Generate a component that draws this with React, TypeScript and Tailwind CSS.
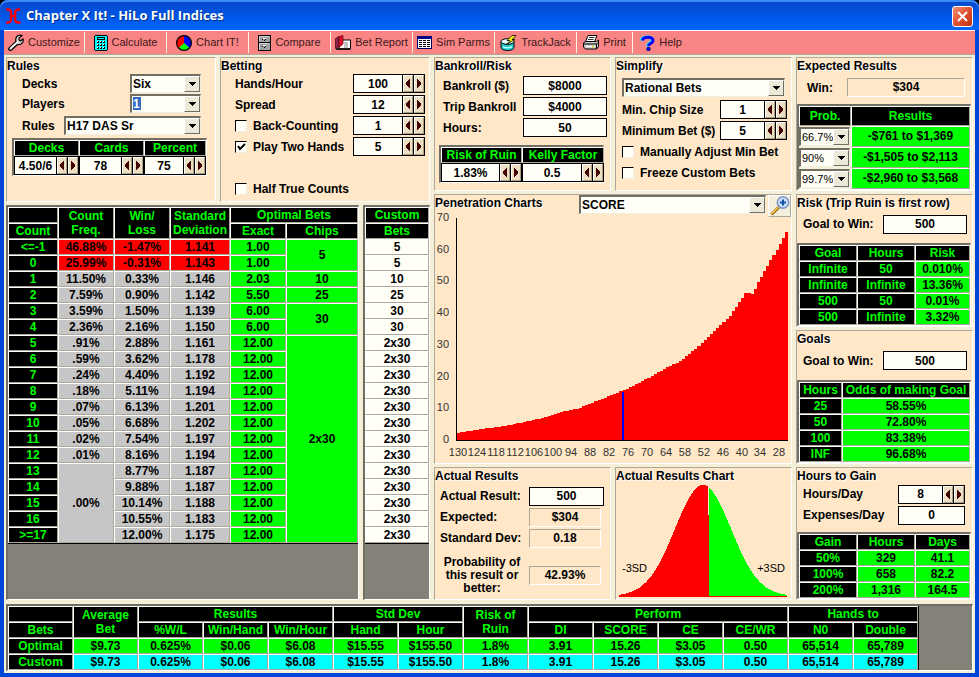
import { useId, useState } from "react"
import type { ReactNode } from "react"
import clsx from "clsx"

// ── Data ──────────────────────────────────────────────────────────────────────

// count, frequency, win/loss, standard deviation, exact bet, custom bet
const COUNT_ROWS = [
  ["<=-1", "46.88%", "-1.47%", "1.141", "1.00", "5"],
  ["0", "25.99%", "-0.31%", "1.143", "1.00", "5"],
  ["1", "11.50%", "0.33%", "1.146", "2.03", "10"],
  ["2", "7.59%", "0.90%", "1.142", "5.50", "25"],
  ["3", "3.59%", "1.50%", "1.139", "6.00", "30"],
  ["4", "2.36%", "2.16%", "1.150", "6.00", "30"],
  ["5", ".91%", "2.88%", "1.161", "12.00", "2x30"],
  ["6", ".59%", "3.62%", "1.178", "12.00", "2x30"],
  ["7", ".24%", "4.40%", "1.192", "12.00", "2x30"],
  ["8", ".18%", "5.11%", "1.194", "12.00", "2x30"],
  ["9", ".07%", "6.13%", "1.201", "12.00", "2x30"],
  ["10", ".05%", "6.68%", "1.202", "12.00", "2x30"],
  ["11", ".02%", "7.54%", "1.197", "12.00", "2x30"],
  ["12", ".01%", "8.16%", "1.194", "12.00", "2x30"],
  ["13", ".00%", "8.77%", "1.187", "12.00", "2x30"],
  ["14", "", "9.88%", "1.187", "12.00", "2x30"],
  ["15", "", "10.14%", "1.188", "12.00", "2x30"],
  ["16", "", "10.55%", "1.183", "12.00", "2x30"],
  [">=17", "", "12.00%", "1.175", "12.00", "2x30"],
]

// first row index -> merged chips cell
const CHIPS: Record<number, { text: string; span: number }> = {
  0: { text: "5", span: 2 },
  2: { text: "10", span: 1 },
  3: { text: "25", span: 1 },
  4: { text: "30", span: 2 },
  6: { text: "2x30", span: 13 },
}

const SUMMARY = [
  "$9.73", "0.625%", "$0.06", "$6.08", "$15.55", "$155.50", "1.8%",
  "3.91", "15.26", "$3.05", "0.50", "65,514", "65,789",
]

const SUMMARY_HEADS = [
  "%W/L", "Win/Hand", "Win/Hour", "Hand", "Hour", "DI", "SCORE", "CE", "CE/WR", "N0", "Double",
]

// outline of the SCORE curve in plot units
const SCORE_CURVE = [
  [22, 216], [48, 212], [75, 208], [112, 200], [130, 194], [142, 192], [162, 184],
  [187, 174], [208, 164], [235, 149], [243, 146], [262, 131], [278, 116], [295, 99],
  [311, 76], [318, 77], [323, 66], [332, 50], [342, 33], [352, 14],
]

// ── Tables ────────────────────────────────────────────────────────────────────

const TONES = {
  head: "bg-black text-[#00ff00]",
  green: "bg-[#00ff00]",
  red: "bg-[#ff0000]",
  gray: "bg-[#c6c6c6]",
  white: "bg-[#fffff8]",
  cyan: "bg-[#00ffff]",
}

interface CellProps {
  tone: keyof typeof TONES
  children?: ReactNode
  rowSpan?: number
  colSpan?: number
  wrap?: boolean
  height?: string
}

function Cell({ tone, children, rowSpan, colSpan, wrap, height = "h-4" }: CellProps) {
  const Tag = tone === "head" ? "th" : "td"
  return (
    <Tag
      rowSpan={rowSpan}
      colSpan={colSpan}
      className={clsx(
        "border-t border-r border-b border-l border-t-white border-l-white border-r-[#aca899] border-b-[#aca899] p-0 text-center leading-[14px] font-bold",
        !wrap && "whitespace-nowrap",
        TONES[tone],
        height,
      )}
    >
      {children}
    </Tag>
  )
}

function Grid({ cols, className, children }: { cols: string[]; className?: string; children: ReactNode }) {
  return (
    <table className={clsx("table-fixed border-separate border-spacing-0", className)}>
      <colgroup>
        {cols.map((c, i) => (
          <col key={i} className={c} />
        ))}
      </colgroup>
      <tbody>{children}</tbody>
    </table>
  )
}

const SUNKEN = "border-t-2 border-r border-b border-l-2 border-t-[#716f64] border-l-[#716f64] border-r-white border-b-white"

// ── Controls ──────────────────────────────────────────────────────────────────

function Panel({ title, className, children }: { title: string; className?: string; children: ReactNode }) {
  return (
    <section
      className={clsx(
        "flex min-w-0 flex-col border border-t-[#aca899] border-r-white border-b-white border-l-[#aca899] bg-[#ffe7c8]",
        className,
      )}
    >
      <h2 className="h-4 leading-4 whitespace-nowrap [text-shadow:1px_1px_0_#fff]">{title}</h2>
      {children}
    </section>
  )
}

function SpinArrow({ dir }: { dir: "left" | "right" }) {
  return (
    <button
      type="button"
      aria-label={dir === "left" ? "Decrease" : "Increase"}
      className="ml-px flex w-2.5 shrink-0 items-center justify-center self-stretch border border-t-white border-r-[#aca080] border-b-[#aca080] border-l-white bg-[#ecdfc4]"
    >
      <svg width="4" height="9" viewBox="0 0 4 9" fill="#400000" shapeRendering="crispEdges">
        {dir === "left" ? (
          <path d="M3 0h1v9H3V8H2V7H1V6H0V3h1V2h1V1h1z" />
        ) : (
          <path d="M0 0h1v1h1v1h1v1h1v3H3v1H2v1H1v1H0z" />
        )}
      </svg>
    </button>
  )
}

interface SpinProps {
  id?: string
  label?: string
  value: string
  className?: string
}

function Spin({ id, label, value, className }: SpinProps) {
  const [text, setText] = useState(value)
  return (
    <div className={clsx("flex h-[19px] items-stretch border border-black bg-black", className)}>
      <input
        id={id}
        aria-label={label}
        value={text}
        onChange={(e) => setText(e.target.value)}
        className="w-0 flex-1 bg-[#fffff8] text-center font-bold outline-none"
      />
      <SpinArrow dir="left" />
      <SpinArrow dir="right" />
    </div>
  )
}

function TextBox({ id, value, className }: SpinProps) {
  const [text, setText] = useState(value)
  return (
    <input
      id={id}
      value={text}
      onChange={(e) => setText(e.target.value)}
      className={clsx("h-[19px] border border-black bg-[#fffff8] text-center font-bold outline-none", className)}
    />
  )
}

function Readout({ id, value, className }: SpinProps) {
  return (
    <output
      id={id}
      className={clsx(
        "h-[19px] border border-t-[#aca899] border-r-white border-b-white border-l-[#aca899] text-center leading-[17px]",
        className,
      )}
    >
      {value}
    </output>
  )
}

interface ComboProps extends SpinProps {
  selected?: boolean
  plain?: boolean
}

function Combo({ id, label, value, className, selected, plain }: ComboProps) {
  return (
    <div
      className={clsx(
        "relative h-[19px] border-t-2 border-r border-b border-l-2 border-t-[#716f64] border-r-[#f1efe2] border-b-[#f1efe2] border-l-[#716f64] bg-[#fffff8]",
        className,
      )}
    >
      {selected && <span className="absolute top-px left-px h-[13px] w-2 bg-[#316ac5]" />}
      <select
        id={id}
        aria-label={label}
        defaultValue={value}
        className={clsx(
          "relative block h-4 w-full appearance-none bg-transparent pl-px leading-[14px] outline-none",
          plain ? "text-[11px] font-normal" : "font-bold",
          selected && "text-white",
        )}
      >
        <option className="text-black">{value}</option>
      </select>
      <span className="pointer-events-none absolute top-0 right-0 flex h-4 w-4 items-center justify-center border border-t-white border-r-[#716f64] border-b-[#716f64] border-l-white bg-[#ece9d8]">
        <svg width="7" height="4" viewBox="0 0 7 4" shapeRendering="crispEdges">
          <path d="M0 0h7v1H6v1H5v1H4v1H3V3H2V2H1V1H0z" />
        </svg>
      </span>
    </div>
  )
}

function Check({ id, label, checked }: { id: string; label: string; checked?: boolean }) {
  return (
    <div className="flex h-[19px] items-center gap-1.5">
      <span className="relative h-3 w-3">
        <input
          id={id}
          type="checkbox"
          defaultChecked={checked}
          className="peer block h-3 w-3 appearance-none border border-t-black border-r-[#f1efe2] border-b-[#f1efe2] border-l-black bg-[#fffff8]"
        />
        <svg
          className="pointer-events-none absolute top-0 left-0 hidden peer-checked:block"
          width="12"
          height="12"
          viewBox="0 0 12 12"
          fill="none"
          stroke="#000"
          strokeWidth="2"
        >
          <path d="M3 5l2 3 5-5" />
        </svg>
      </span>
      <label htmlFor={id}>{label}</label>
    </div>
  )
}

function Row({ label, className, children }: { label: string; className?: string; children: (id: string) => ReactNode }) {
  const id = useId()
  return (
    <div className={clsx("flex items-center justify-between", className)}>
      <label htmlFor={id} className="whitespace-nowrap">
        {label}
      </label>
      {children(id)}
    </div>
  )
}

// ── Toolbar ───────────────────────────────────────────────────────────────────

const wrench = (
  <svg width="16" height="17" viewBox="0 0 16 17">
    <path
      d="M1 14 8 7.500C7 4 9 1 12.500 1L14 1.500 11 4v2l1.500 1L15 5c1 3-1.500 6-5.500 5.500L3.500 16C2 17 0 15.500 1 14z"
      fill="#d8d8d8"
      stroke="#000"
      strokeWidth="1.200"
    />
    <path d="M2.500 14 10 7.500" stroke="#fff" strokeWidth="1.200" />
  </svg>
)

const calculator = (
  <svg width="14" height="16" viewBox="0 0 14 16" shapeRendering="crispEdges">
    <path d="M1 0h12v1h1v14h-1v1H1v-1H0V1h1z" fill="#000" />
    <path d="M1 1h12v14H1z" fill="#0ff" />
    <path d="M3 2h8v3H3z" fill="#000" />
    <path d="M4 3h6v1H4z" fill="#0ff" />
    <path d="M3 6h2v2H3zM6 6h2v2H6zM9 6h2v2H9zM3 9h2v2H3zM6 9h2v2H6zM9 9h2v2H9zM3 12h2v2H3zM6 12h2v2H6zM9 12h2v2H9z" fill="#000" />
    <path d="M3 6h1v1H3zM6 6h1v1H6zM9 6h1v1H9zM3 9h1v1H3zM6 9h1v1H6zM9 9h1v1H9zM3 12h1v1H3zM6 12h1v1H6zM9 12h1v1H9z" fill="#fff" />
  </svg>
)

const pie = (
  <svg width="16" height="16" viewBox="0 0 16 16">
    <path d="M8 8V0.500A7.500 7.500 0 0 1 13.500 13z" fill="#00f" />
    <path d="M8 8 13.500 13A7.500 7.500 0 0 1 2.500 13z" fill="#0f0" />
    <path d="M8 8 2.500 13A7.500 7.500 0 0 1 8 .5z" fill="#f00" />
    <circle cx="8" cy="8" r="7.400" fill="none" stroke="#000" strokeWidth="1.200" />
  </svg>
)

const cabinet = (
  <svg width="13" height="16" viewBox="0 0 13 16" shapeRendering="crispEdges">
    <path d="M0 0h13v16H0z" fill="#000" />
    <path d="M1 1h11v6H1zM1 8h11v7H1z" fill="#a0a0a0" />
    <path d="M1 1h10v1H1zM1 8h10v1H1zM1 1h1v6H1zM1 8h1v7H1z" fill="#d0d0d0" />
    <path d="M5 3h3v1H5zM5 10h3v1H5z" fill="#fff" />
    <path d="M4 4h1v1H4zM7 4h1v1H7zM4 11h1v1H4zM7 11h1v1H7zM6 5h1v1H6zM6 12h1v1H6z" fill="#000" />
  </svg>
)

const report = (
  <svg width="16" height="15" viewBox="0 0 16 15">
    <path d="M4 5h11.500v9H4z" fill="#fff" stroke="#000" />
    <path d="M9 8h4M9 10h4M9 12h4" stroke="#888" />
    <path d="M.5 3.500 4 1.500v10l-3.500 2z" fill="#902050" stroke="#400" strokeWidth=".7" />
    <path d="M4 9.500V1.500L8 .5V9l-4 3.500z" fill="#e01030" stroke="#600" strokeWidth=".7" />
    <path d="M1 14h14" stroke="#000" strokeWidth="1.500" />
  </svg>
)

const sheet = (
  <svg width="15" height="13" viewBox="0 0 15 13" shapeRendering="crispEdges">
    <path d="M0 0h15v13H0z" fill="#000060" />
    <path d="M1 3h13v9H1z" fill="#fff" />
    <path d="M0 0h15v3H0z" fill="#000080" />
    <path d="M2 4h3v1H2zM6 4h3v1H6zM10 4h3v1h-3zM2 6h3v1H2zM6 6h3v1H6zM10 6h3v1h-3zM2 8h3v1H2zM6 8h3v1H6zM10 8h3v1h-3zM2 10h3v1H2zM6 10h3v1H6zM10 10h3v1h-3z" fill="#000" />
  </svg>
)

const drum = (
  <svg width="17" height="16" viewBox="0 0 17 16">
    <path d="M1 6.500v6C1 14 3.500 15.500 7.500 15.500S14 14 14 12.500v-6" fill="#20c8c8" stroke="#000" />
    <ellipse cx="7.500" cy="6.500" rx="6.500" ry="2.800" fill="#e8ffff" stroke="#000" />
    <path d="M3 11.500c2 1.500 6 1.500 9 0" stroke="#c0ffff" strokeWidth="1.500" fill="none" />
    <path d="M12 .5 7 5.500h3L6.500 9.500 15 4.500h-3L16 .5z" fill="#ff0" stroke="#000" strokeWidth=".8" />
  </svg>
)

const printer = (
  <svg width="16" height="15" viewBox="0 0 16 15">
    <path d="M5 .5h9L11.500 7H2.500z" fill="#fff" stroke="#000" />
    <path d="M6 2.500h5.500M5 4.500h5.500" stroke="#000" strokeWidth=".8" />
    <path d="M.5 8 2.500 6.500h11L15.500 5v6.500l-2 2.500h-11l-2-2z" fill="#c8c8c8" stroke="#000" />
    <path d="M1 9h12.500L15 7.500M13.500 9v5" fill="none" stroke="#000" />
    <path d="M3 11.500h9" stroke="#fff" strokeWidth="1.500" />
    <path d="M9 11.500h2" stroke="#d0d000" strokeWidth="1.500" />
  </svg>
)

const help = (
  <svg width="15" height="16" viewBox="0 0 15 16" fill="none">
    <path d="M1.500 5.500C1.500 1 12 .5 12 5c0 3-4.500 2.500-4.500 6.500" stroke="#0ff" strokeWidth="3" />
    <path d="M2.500 5.500C3 1.500 13 1 13 5.500c0 3-4.500 3-4.500 5.500" stroke="#00f" strokeWidth="3" />
    <circle cx="8.500" cy="14" r="1.900" fill="#00f" stroke="#004" strokeWidth=".5" />
  </svg>
)

const TOOLS = [
  { label: "Customize", icon: wrench, width: "w-[81px]" },
  { label: "Calculate", icon: calculator, width: "w-[82px]" },
  { label: "Chart IT!", icon: pie, width: "w-[82px]" },
  { label: "Compare", icon: cabinet, width: "w-[82px]" },
  { label: "Bet Report", icon: report, width: "w-[82px]" },
  { label: "Sim Parms", icon: sheet, width: "w-[82px]" },
  { label: "TrackJack", icon: drum, width: "w-[82px]" },
  { label: "Print", icon: printer, width: "w-[56px]" },
  { label: "Help", icon: help, width: "w-[56px]" },
]

function Toolbar() {
  return (
    <nav className="flex h-[25px] items-stretch border-t border-b border-t-white border-b-[#aca899] bg-[#f88484]">
      {TOOLS.map((tool, i) => (
        <button
          key={tool.label}
          type="button"
          className={clsx(
            "my-px flex shrink-0 items-center justify-center gap-1 text-[11px] whitespace-nowrap text-[#3c1820]",
            tool.width,
            i < TOOLS.length - 1 && "border-r border-[#f8f4e4]",
          )}
        >
          {tool.icon}
          {tool.label}
        </button>
      ))}
    </nav>
  )
}

function TitleBar() {
  return (
    <header className="flex h-[30px] items-center gap-1 rounded-t-lg bg-linear-to-b from-[#0a48c8] via-[#0054e4] to-[#0066fe] pt-0.5 pr-1.5 pl-[5px] shadow-[inset_0_2px_0_#3a8cf8]">
      <svg width="17" height="16" viewBox="0 0 17 16" fill="none" stroke="#f00010" strokeWidth="2.500">
        <path d="M1 1.500h2.500C6.500 1.500 6 4 6 8s.5 6.500-2.500 6.500H1M15 1.500h-2C10 1.500 10 4 10 8s0 6.500 3 6.500h2.500M6 8h4" />
      </svg>
      <h1 className="flex-1 font-['Open_Sans'] text-[13px] font-bold text-white [text-shadow:1px_1px_0_#003088]">
        Chapter X It! - HiLo Full Indices
      </h1>
      <button
        type="button"
        aria-label="Close"
        className="flex h-[21px] w-[21px] items-center justify-center rounded-[3px] border border-white bg-linear-to-br from-[#f09070] via-[#e05030] to-[#c03010]"
      >
        <svg width="11" height="11" viewBox="0 0 11 11" stroke="#fff" strokeWidth="2">
          <path d="M1 1l9 9M10 1 1 10" />
        </svg>
      </button>
    </header>
  )
}

// ── Charts ────────────────────────────────────────────────────────────────────

function curveAt(x: number): number {
  let i = 1
  while (i < SCORE_CURVE.length - 1 && SCORE_CURVE[i][0] < x) i++
  const [x0, y0] = SCORE_CURVE[i - 1]
  const [x1, y1] = SCORE_CURVE[i]
  return y0 + ((y1 - y0) * (x - x0)) / (x1 - x0)
}

function scorePath(): string {
  const bars = 106
  const step = 331 / bars
  let d = "M22 223"
  for (let i = 0; i < bars; i++) {
    const x = 22 + i * step
    d += `V${Math.round(curveAt(x + step / 2))}H${Math.round(x + step)}`
  }
  return d + "V223z"
}

function ScoreChart() {
  const xLabels = Array.from({ length: 18 }, (_, i) => 130 - i * 6)
  return (
    <svg viewBox="0 0 356 245" className="w-full overflow-visible" fontSize="11" fill="#333" fontWeight="400">
      <path d={scorePath()} fill="#f00" shapeRendering="crispEdges" />
      <path d="M187 175h2v48h-2z" fill="#00f" shapeRendering="crispEdges" />
      <path d="M21 1h1v222h331v1H21z" fill="#000" shapeRendering="crispEdges" />
      {[0, 10, 20, 30, 40, 50, 60, 70].map((v) => (
        <text key={v} x="14" y={226 - Math.round(v * 3.17)} textAnchor="end">
          {v}
        </text>
      ))}
      {xLabels.map((v, i) => (
        <text key={v} x={Math.round(23 + i * 18.9)} y="239" textAnchor="middle">
          {v}
        </text>
      ))}
    </svg>
  )
}

function bell(from: number, to: number): string {
  let d = `M${from} 112`
  for (let x = from; x < to; x++) {
    const z = (x + 0.5 - 87) / 28
    d += `V${Math.round(112 - 111 * Math.exp((-z * z) / 2))}H${x + 1}`
  }
  return d + "V112z"
}

function BellChart() {
  return (
    <svg viewBox="0 0 175 115" className="w-full" fontSize="11" fontWeight="400" shapeRendering="crispEdges">
      <path d={bell(3, 93)} fill="#f00" />
      <path d={bell(93, 171)} fill="#0f0" />
      <path d="M92 3h1v28h-1z" fill="#ffe7c8" />
      <path d="M3 112h168v1H3z" fill="#f00" />
      <text x="6" y="88">-3SD</text>
      <text x="169" y="88" textAnchor="end">+3SD</text>
    </svg>
  )
}

// ── Sections ──────────────────────────────────────────────────────────────────

function RulesPanel() {
  return (
    <Panel title="Rules">
      <div className="flex flex-col gap-px pr-3.5 pl-[15px]">
        <Row label="Decks">{(id) => <Combo id={id} value="Six" className="w-[71px]" />}</Row>
        <Row label="Players">{(id) => <Combo id={id} value="1" selected className="w-[71px]" />}</Row>
        <Row label="Rules" className="mt-0.5">
          {(id) => <Combo id={id} value="H17 DAS Sr" className="w-[137px]" />}
        </Row>
      </div>
      <div className={clsx("mt-[3px] ml-[5px] w-[195px]", SUNKEN)}>
        <Grid cols={["w-[65px]", "w-[65px]", "w-[62px]"]} className="w-full">
          <tr>
            <Cell tone="head">Decks</Cell>
            <Cell tone="head">Cards</Cell>
            <Cell tone="head">Percent</Cell>
          </tr>
          <tr>
            <td className="p-0"><Spin label="Decks dealt" value="4.50/6" /></td>
            <td className="p-0"><Spin label="Cards dealt" value="78" /></td>
            <td className="p-0"><Spin label="Percent dealt" value="75" /></td>
          </tr>
        </Grid>
      </div>
    </Panel>
  )
}

function BettingPanel() {
  return (
    <Panel title="Betting">
      <div className="flex flex-col gap-0.5 pr-1 pl-3.5">
        <Row label="Hands/Hour">{(id) => <Spin id={id} value="100" className="w-[72px]" />}</Row>
        <Row label="Spread">{(id) => <Spin id={id} value="12" className="w-[72px]" />}</Row>
        <div className="flex justify-between">
          <Check id="back-counting" label="Back-Counting" />
          <Spin label="Back-counting hands" value="1" className="w-[72px]" />
        </div>
        <div className="flex justify-between">
          <Check id="two-hands" label="Play Two Hands" checked />
          <Spin label="Two hands from" value="5" className="w-[72px]" />
        </div>
      </div>
      <div className="mt-[23px] pl-3.5">
        <Check id="half-true" label="Half True Counts" />
      </div>
    </Panel>
  )
}

function CountTable() {
  return (
    <div className={clsx("flex-1 bg-[#848278]", SUNKEN)}>
      <Grid
        cols={["w-[50px]", "w-[56px]", "w-[56px]", "w-[60px]", "w-[56px]", "w-[72px]"]}
        className="w-full border-b border-black"
      >
        <tr>
          <Cell tone="head" />
          <Cell tone="head" rowSpan={2} wrap>Count Freq.</Cell>
          <Cell tone="head" rowSpan={2} wrap>Win/<br />Loss</Cell>
          <Cell tone="head" rowSpan={2} wrap>Standard Deviation</Cell>
          <Cell tone="head" colSpan={2}>Optimal Bets</Cell>
        </tr>
        <tr>
          <Cell tone="head">Count</Cell>
          <Cell tone="head">Exact</Cell>
          <Cell tone="head">Chips</Cell>
        </tr>
        {COUNT_ROWS.map(([count, freq, winLoss, dev, exact], i) => {
          const tone = i < 2 ? "red" : "gray"
          return (
            <tr key={count}>
              <Cell tone="head">{count}</Cell>
              {freq && <Cell tone={tone} rowSpan={i === 14 ? 5 : 1}>{freq}</Cell>}
              <Cell tone={tone}>{winLoss}</Cell>
              <Cell tone={tone}>{dev}</Cell>
              <Cell tone="green">{exact}</Cell>
              {CHIPS[i] && <Cell tone="green" rowSpan={CHIPS[i].span}>{CHIPS[i].text}</Cell>}
            </tr>
          )
        })}
      </Grid>
    </div>
  )
}

function CustomTable() {
  return (
    <div className={clsx("w-[67px] shrink-0 bg-[#848278]", SUNKEN)}>
      <Grid cols={["w-[64px]"]} className="w-full border-b border-black">
        <tr><Cell tone="head">Custom</Cell></tr>
        <tr><Cell tone="head">Bets</Cell></tr>
        {COUNT_ROWS.map((row) => (
          <tr key={row[0]}>
            <Cell tone="white">{row[5]}</Cell>
          </tr>
        ))}
      </Grid>
    </div>
  )
}

function BankrollPanel() {
  return (
    <Panel title="Bankroll/Risk">
      <div className="mt-0.5 flex flex-col gap-0.5 pr-[3px] pl-2">
        <Row label="Bankroll ($)">{(id) => <TextBox id={id} value="$8000" className="w-[84px]" />}</Row>
        <Row label="Trip Bankroll">{(id) => <TextBox id={id} value="$4000" className="w-[84px]" />}</Row>
        <Row label="Hours:">{(id) => <TextBox id={id} value="50" className="w-[84px]" />}</Row>
      </div>
      <div className={clsx("mt-2 mr-1.5 ml-1", SUNKEN)}>
        <Grid cols={["w-[81px]", "w-[82px]"]} className="w-full">
          <tr>
            <Cell tone="head">Risk of Ruin</Cell>
            <Cell tone="head">Kelly Factor</Cell>
          </tr>
          <tr>
            <td className="p-0"><Spin label="Risk of Ruin" value="1.83%" /></td>
            <td className="p-0"><Spin label="Kelly Factor" value="0.5" /></td>
          </tr>
        </Grid>
      </div>
    </Panel>
  )
}

function SimplifyPanel() {
  return (
    <Panel title="Simplify">
      <div className="mt-1 flex flex-col gap-0.5 pr-1 pl-1.5">
        <Combo label="Simplify" value="Rational Bets" className="mb-px w-[163px]" />
        <Row label="Min. Chip Size">{(id) => <Spin id={id} value="1" className="w-[67px]" />}</Row>
        <Row label="Minimum Bet ($)">{(id) => <Spin id={id} value="5" className="w-[67px]" />}</Row>
        <Check id="manual-min" label="Manually Adjust Min Bet" />
        <Check id="freeze" label="Freeze Custom Bets" />
      </div>
    </Panel>
  )
}

function PenetrationPanel() {
  return (
    <Panel title="" className="relative col-span-2 row-span-2">
      <div className="-mt-4 flex h-[22px] items-start">
        <label htmlFor="chart-kind" className="h-4 flex-1 leading-4 [text-shadow:1px_1px_0_#fff]">
          Penetration Charts
        </label>
        <Combo id="chart-kind" value="SCORE" className="w-[187px]" />
        <button
          type="button"
          aria-label="Zoom chart"
          className="ml-0.5 flex h-[22px] w-[23px] items-center justify-center border border-t-white border-r-[#aca899] border-b-[#aca899] border-l-white bg-[#f4efdc]"
        >
          <svg width="20" height="20" viewBox="0 0 20 20">
            <path d="M1.500 18.500 9 11" stroke="#906010" strokeWidth="3" />
            <path d="M1.500 18 8.500 11" stroke="#ffc840" strokeWidth="1.500" />
            <circle cx="13" cy="6.500" r="5.700" fill="#c8e0fc" stroke="#8090c8" strokeWidth="1.500" />
            <path d="M13 3.500v6M10 6.500h6" stroke="#1850a8" strokeWidth="2" />
          </svg>
        </button>
      </div>
      <ScoreChart />
    </Panel>
  )
}

function ActualResultsPanel() {
  return (
    <Panel title="Actual Results">
      <div className="mt-[3px] flex flex-col gap-0.5 pl-[5px]">
        <Row label="Actual Result:" className="pr-1.5">
          {(id) => <TextBox id={id} value="500" className="w-[75px]" />}
        </Row>
        <Row label="Expected:" className="pr-[9px]">
          {(id) => <Readout id={id} value="$304" className="w-[72px]" />}
        </Row>
        <Row label="Standard Dev:" className="pr-[9px]">
          {(id) => <Readout id={id} value="0.18" className="w-[72px]" />}
        </Row>
        <div className="mt-1.5 flex items-center justify-between pr-[9px]">
          <label htmlFor="probability" className="w-[84px] text-center leading-[13px]">
            Probability of this result or better:
          </label>
          <Readout id="probability" value="42.93%" className="w-[72px]" />
        </div>
      </div>
    </Panel>
  )
}

function ExpectedPanel() {
  return (
    <Panel title="Expected Results">
      <Row label="Win:" className="mt-1 pr-[7px] pl-2.5">
        {(id) => <Readout id={id} value="$304" className="w-[118px]" />}
      </Row>
      <div className={clsx("mt-auto mr-px", SUNKEN)}>
        <Grid cols={["w-[52px]", ""]} className="w-full">
          <tr>
            <Cell tone="head" height="h-5">Prob.</Cell>
            <Cell tone="head" height="h-5">Results</Cell>
          </tr>
          {[
            ["66.7%", "-$761 to $1,369"],
            ["90%", "-$1,505 to $2,113"],
            ["99.7%", "-$2,960 to $3,568"],
          ].map(([prob, range]) => (
            <tr key={prob}>
              <td className="h-[21px] bg-[#f5efd8] p-0">
                <Combo label={`Range at ${prob}`} value={prob} plain className="w-[51px]" />
              </td>
              <Cell tone="green" height="h-[21px]">{range}</Cell>
            </tr>
          ))}
        </Grid>
      </div>
    </Panel>
  )
}

function GoalRow() {
  return (
    <Row label="Goal to Win:" className="mt-1 pr-[5px] pl-1.5">
      {(id) => <TextBox id={id} value="500" className="w-[84px]" />}
    </Row>
  )
}

function ResultGrid({ cols, heads, rows, keys }: { cols: string[]; heads: string[]; rows: string[][]; keys: number }) {
  return (
    <div className={clsx("mt-auto mr-px", SUNKEN)}>
      <Grid cols={cols} className="w-full">
        <tr>
          {heads.map((h) => (
            <Cell key={h} tone="head">{h}</Cell>
          ))}
        </tr>
        {rows.map((row, i) => (
          <tr key={i}>
            {row.map((text, j) => (
              <Cell key={j} tone={j < keys ? "head" : "green"}>{text}</Cell>
            ))}
          </tr>
        ))}
      </Grid>
    </div>
  )
}

function SummaryTable() {
  return (
    <div className={clsx("bg-[#848278]", SUNKEN)}>
      <Grid cols={Array.from({ length: 14 }, () => "w-[65px]")} className="w-[911px] border-r border-black">
        <tr>
          <Cell tone="head" />
          <Cell tone="head" rowSpan={2} wrap>Average Bet</Cell>
          <Cell tone="head" colSpan={3}>Results</Cell>
          <Cell tone="head" colSpan={2}>Std Dev</Cell>
          <Cell tone="head" rowSpan={2} wrap>Risk of Ruin</Cell>
          <Cell tone="head" colSpan={4}>Perform</Cell>
          <Cell tone="head" colSpan={2}>Hands to</Cell>
        </tr>
        <tr>
          <Cell tone="head">Bets</Cell>
          {SUMMARY_HEADS.map((h) => (
            <Cell key={h} tone="head">{h}</Cell>
          ))}
        </tr>
        <tr>
          <Cell tone="head">Optimal</Cell>
          {SUMMARY.map((v, i) => (
            <Cell key={i} tone="green">{v}</Cell>
          ))}
        </tr>
        <tr>
          <Cell tone="head">Custom</Cell>
          {SUMMARY.map((v, i) => (
            <Cell key={i} tone="cyan">{v}</Cell>
          ))}
        </tr>
      </Grid>
    </div>
  )
}

// ── App ───────────────────────────────────────────────────────────────────────

export default function App() {
  return (
    <div className="min-h-screen bg-black font-['Liberation_Sans',sans-serif] text-[12px] text-black">
      <div className="flex min-h-screen flex-col rounded-t-lg bg-[#0046d8]">
        <TitleBar />
        <div className="mx-1 mb-1 flex flex-1 flex-col bg-[#f5efd8]">
          <Toolbar />
          <main className="flex flex-1 flex-col gap-1 px-0.5 pt-0.5 pb-0.5 font-bold">
            <div className="grid flex-1 grid-cols-[424fr_358fr_177fr] gap-1">
              <div className="flex flex-col gap-[3px]">
                <div className="grid h-[145px] grid-cols-2 gap-1">
                  <RulesPanel />
                  <BettingPanel />
                </div>
                <div className="flex flex-1 gap-1">
                  <CountTable />
                  <CustomTable />
                </div>
              </div>

              <div className="grid grid-cols-2 grid-rows-4 gap-x-1 gap-y-[3px]">
                <BankrollPanel />
                <SimplifyPanel />
                <PenetrationPanel />
                <ActualResultsPanel />
                <Panel title="Actual Results Chart">
                  <BellChart />
                </Panel>
              </div>

              <div className="grid grid-rows-4 gap-y-[3px]">
                <ExpectedPanel />
                <Panel title="Risk (Trip Ruin is first row)">
                  <GoalRow />
                  <ResultGrid
                    cols={["w-[58px]", "w-[58px]", ""]}
                    heads={["Goal", "Hours", "Risk"]}
                    keys={2}
                    rows={[
                      ["Infinite", "50", "0.010%"],
                      ["Infinite", "Infinite", "13.36%"],
                      ["500", "50", "0.01%"],
                      ["500", "Infinite", "3.32%"],
                    ]}
                  />
                </Panel>
                <Panel title="Goals">
                  <GoalRow />
                  <ResultGrid
                    cols={["w-[43px]", ""]}
                    heads={["Hours", "Odds of making Goal"]}
                    keys={1}
                    rows={[
                      ["25", "58.55%"],
                      ["50", "72.80%"],
                      ["100", "83.38%"],
                      ["INF", "96.68%"],
                    ]}
                  />
                </Panel>
                <Panel title="Hours to Gain">
                  <div className="mt-px flex flex-col gap-0.5 pr-[7px] pl-1.5">
                    <Row label="Hours/Day">{(id) => <Spin id={id} value="8" className="w-[67px]" />}</Row>
                    <Row label="Expenses/Day">{(id) => <TextBox id={id} value="0" className="w-[67px]" />}</Row>
                  </div>
                  <ResultGrid
                    cols={["w-[58px]", "w-[58px]", ""]}
                    heads={["Gain", "Hours", "Days"]}
                    keys={1}
                    rows={[
                      ["50%", "329", "41.1"],
                      ["100%", "658", "82.2"],
                      ["200%", "1,316", "164.5"],
                    ]}
                  />
                </Panel>
              </div>
            </div>
            <SummaryTable />
          </main>
        </div>
      </div>
    </div>
  )
}
